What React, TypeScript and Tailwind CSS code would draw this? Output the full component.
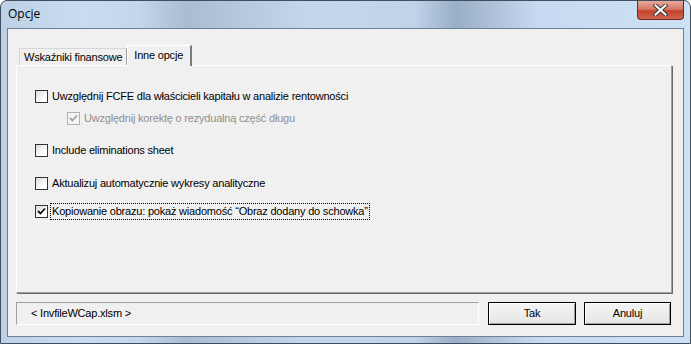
import React from "react";

const font = "font-['Tahoma','Liberation_Sans',sans-serif] text-[11px] tracking-[-0.2px]";

function Box({ checked, disabled }: { checked?: boolean; disabled?: boolean }) {
  return (
    <span
      className={`flex h-[13px] w-[13px] shrink-0 items-center justify-center border ${
        disabled ? "border-[#b1b1b1] bg-[#f4f4f4]" : "border-[#333] bg-[linear-gradient(135deg,#dcdcdc,#ffffff_70%)]"
      }`}
    >
      {checked && (
        <svg width="9" height="9" viewBox="0 0 9 9">
          <path
            d="M1 4 L3.5 6.5 L8 1.5"
            fill="none"
            stroke={disabled ? "#a0a0a0" : "#111"}
            strokeWidth="1.8"
          />
        </svg>
      )}
    </span>
  );
}

function Option({
  label,
  checked,
  disabled,
  focused,
  indent,
  className,
}: {
  label: string;
  checked?: boolean;
  disabled?: boolean;
  focused?: boolean;
  indent?: boolean;
  className?: string;
}) {
  return (
    <div className={`flex h-[17px] items-center gap-[2px] ${indent ? "pl-[50px]" : "pl-[18px]"} ${className ?? ""}`}>
      <Box checked={checked} disabled={disabled} />
      <span
        className={`px-[1px] leading-[15px] ${disabled ? "text-[#8f8f8f]" : "text-black"} ${
          focused ? "border border-dotted border-black" : "border border-transparent"
        }`}
      >
        {label}
      </span>
    </div>
  );
}

export default function App() {
  return (
    <div className={`h-[344px] w-[691px] overflow-hidden ${font}`}>
      <div className="relative flex h-full w-full flex-col rounded-t-[7px] border border-[#404e5e] bg-[linear-gradient(90deg,#bcd1e7_0%,#cadcef_12%,#c4d6e9_20%,#a9bcd0_27%,#b4c7db_34%,#c4d8ed_45%,#bfd3e9_60%,#98afc7_66%,#a8bdd3_70%,#c6dbf1_78%,#cde1f5_100%)]">
        {/* title bar */}
        <div className="flex h-[27px] shrink-0 items-center pb-[1px] pl-[7px]">
          <span className="font-['Open_Sans','Noto_Sans',sans-serif] text-[12px] tracking-normal text-black">Opcje</span>
        </div>
        <div className="absolute right-[6px] top-0 flex h-[19px] w-[47px] items-center justify-center rounded-b-[4px] border border-t-0 border-[#6b2a22] bg-[linear-gradient(180deg,#e9a89a_0%,#d47866_45%,#c4432c_55%,#d0654f_100%)]">
          <svg width="15" height="12" viewBox="0 0 15 12">
            <path d="M2.5 1.5 L12.5 10.5 M12.5 1.5 L2.5 10.5" stroke="#3a3a3a" strokeWidth="4" strokeLinecap="square" />
            <path d="M2.5 1.5 L12.5 10.5 M12.5 1.5 L2.5 10.5" stroke="#ffffff" strokeWidth="2" strokeLinecap="square" />
          </svg>
        </div>

        {/* client */}
        <div className="mx-[6px] mb-[6px] flex flex-1 flex-col border border-[#6d7f93] bg-[#f0f0f0] pl-[8px] pr-[11px]">
          {/* tabs */}
          <div className="mt-[16px] flex h-[20px] items-end pl-[3px]">
            <div className="flex h-[17px] items-center border border-b-0 border-[#d6d6d6] border-r-[#a0a0a0] bg-[#f0f0f0] px-[4px] text-black">
              Wskaźniki finansowe
            </div>
            <div className="relative top-[1px] flex h-[21px] items-center border-l border-t border-white border-r-2 border-r-[#7a7a7a] bg-[#f0f0f0] pl-[6px] pr-[7px] pb-[2px] text-black">
              Inne opcje
            </div>
          </div>
          {/* panel */}
          <div className="flex h-[228px] flex-col border border-white border-b-[#a0a0a0] border-r-[#a0a0a0] shadow-[1px_1px_0_#696969]">
            <Option className="mt-[22px]" label="Uwzględnij FCFE dla właścicieli kapitału w analizie rentowności" />
            <Option className="mt-[5px]" indent checked disabled label="Uwzględnij korektę o rezydualną część długu" />
            <Option className="mt-[15px]" label="Include eliminations sheet" />
            <Option className="mt-[16px]" label="Aktualizuj automatycznie wykresy analityczne" />
            <Option className="mt-[11px]" checked focused label="Kopiowanie obrazu: pokaż wiadomość “Obraz dodany do schowka”" />
          </div>
          {/* bottom */}
          <div className="mt-[9px] flex h-[23px] items-stretch">
            <div className="flex w-[463px] items-center border border-[#a0a0a0] border-b-white border-r-white pl-[14px] text-black">
              &lt; InvfileWCap.xlsm &gt;
            </div>
            <button className="ml-[9px] w-[88px] border border-black bg-[linear-gradient(180deg,#f4f4f4,#e6e6e6)] text-black shadow-[inset_1px_1px_0_#ffffff,inset_-1px_-1px_0_#a0a0a0]">
              Tak
            </button>
            <button className="ml-[8px] w-[87px] border border-black bg-[linear-gradient(180deg,#f4f4f4,#e6e6e6)] text-black shadow-[inset_1px_1px_0_#ffffff,inset_-1px_-1px_0_#a0a0a0]">
              Anuluj
            </button>
          </div>
        </div>
      </div>
    </div>
  );
}
